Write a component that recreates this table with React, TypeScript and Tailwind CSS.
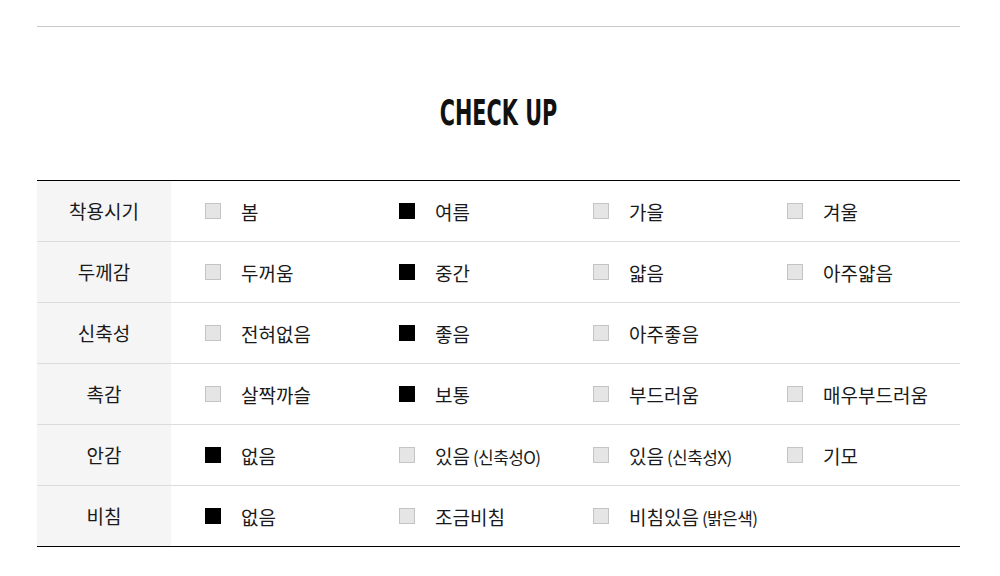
const rows: { label: string; items: { text: string; sub?: string; on?: boolean }[] }[] = [
  { label: "착용시기", items: [{ text: "봄" }, { text: "여름", on: true }, { text: "가을" }, { text: "겨울" }] },
  { label: "두께감", items: [{ text: "두꺼움" }, { text: "중간", on: true }, { text: "얇음" }, { text: "아주얇음" }] },
  { label: "신축성", items: [{ text: "전혀없음" }, { text: "좋음", on: true }, { text: "아주좋음" }] },
  { label: "촉감", items: [{ text: "살짝까슬" }, { text: "보통", on: true }, { text: "부드러움" }, { text: "매우부드러움" }] },
  { label: "안감", items: [{ text: "없음", on: true }, { text: "있음", sub: "(신축성O)" }, { text: "있음", sub: "(신축성X)" }, { text: "기모" }] },
  { label: "비침", items: [{ text: "없음", on: true }, { text: "조금비침" }, { text: "비침있음", sub: "(밝은색)" }] },
];

export default function App() {
  return (
    <div className="w-[1000px] h-[576px] bg-white pt-[26px] font-['Noto_Sans_CJK_KR',sans-serif] text-[#1a1a1a]">
      <div className="w-[923px] ml-[37px]">
        <div className="border-t border-[#c8c8c8]" />
        <h2 className="mt-[67px] h-[38px] text-center text-[35px] leading-[38px] font-bold text-[#111] font-['DejaVu_Sans_Condensed',sans-serif] scale-x-[0.66]">
          CHECK UP
        </h2>
        <div className="mt-[48px] border-t border-b border-black">
          {rows.map((r, i) => (
            <div key={r.label} className={`flex h-[60px] box-content ${i > 0 ? "border-t border-[#dcdcdc]" : ""}`}>
              <div className="w-[134px] shrink-0 bg-[#f5f5f5] flex items-center justify-center text-[19px]">{r.label}</div>
              <div className="flex pl-[34px]">
                {r.items.map((it, j) => (
                  <div key={j} className="w-[194px] flex items-center">
                    <span
                      className={`w-[16px] h-[16px] shrink-0 ${it.on ? "bg-black border border-black" : "bg-[#e5e5e5] border border-[#c4c4c4]"}`}
                    />
                    <span className="ml-[20px] text-[19px] leading-none">
                      {it.text}
                      {it.sub && <span className="ml-[3px] text-[17px] tracking-[-0.6px]">{it.sub}</span>}
                    </span>
                  </div>
                ))}
              </div>
            </div>
          ))}
        </div>
      </div>
    </div>
  );
}
